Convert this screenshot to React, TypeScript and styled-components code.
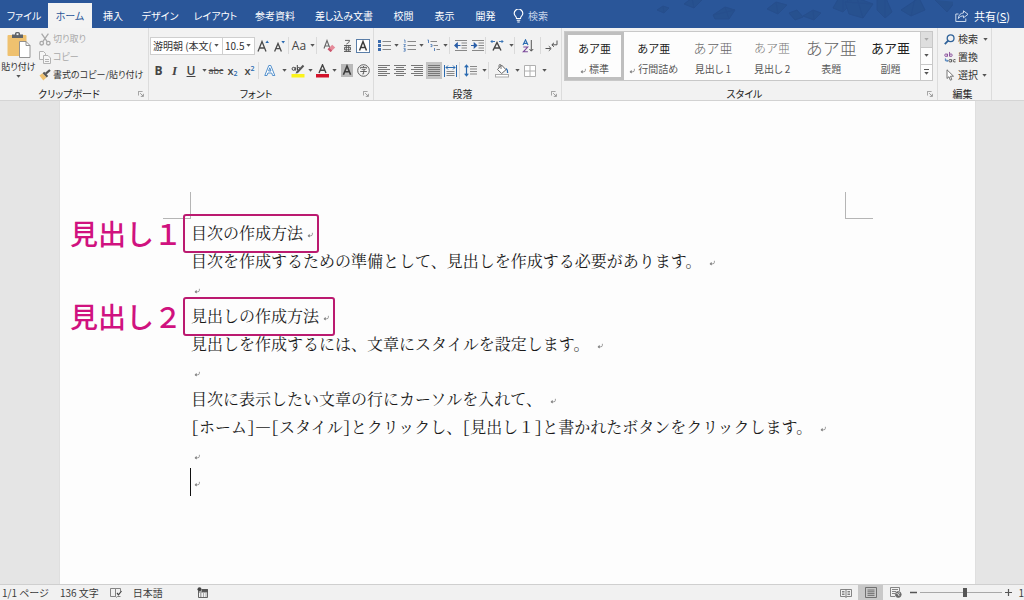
import React from "react";
import styled, { createGlobalStyle, css } from "styled-components";

const UI = `"Noto Sans CJK JP", "Noto Sans", sans-serif`;

const Global = createGlobalStyle`
  * { box-sizing: border-box; }
  html, body { margin: 0; padding: 0; }
  body { font-family: ${UI}; font-size: 10px; color: #333; }
  button, select, input { font: inherit; color: inherit; margin: 0; padding: 0; border: 0; background: none; }
  svg { display: block; flex: none; }
`;

const Shell = styled.div`
  display: flex;
  flex-direction: column;
  min-height: 100vh;
  overflow: hidden;
  background: #e5e5e5;
`;

/* ---------- title bar ---------- */

const TitleBar = styled.header`
  display: flex;
  height: 28px;
  background: #2a5699;
  color: #fff;
  white-space: nowrap;
`;

const Tabs = styled.nav`
  display: flex;
  align-items: flex-end;
  font-feature-settings: "palt";
`;

const Tab = styled.button<{ $w: number; $active?: boolean }>`
  width: ${(p) => p.$w}px;
  height: 25px;
  line-height: 25px;
  text-align: center;
  ${(p) =>
    p.$active &&
    css`
      background: #f3f3f3;
      color: #2a5699;
    `}
`;

const TellMe = styled.button`
  display: flex;
  align-items: center;
  gap: 4px;
  height: 25px;
  margin-left: 7px;
  color: #c5d3ea;
`;

const Backdrop = styled.div`
  flex: 1;
  display: flex;
  justify-content: flex-end;
  overflow: hidden;
`;

const Share = styled.button`
  display: flex;
  align-items: center;
  gap: 5px;
  padding: 4px 14px 0 2px;
  font-size: 11px;
`;

/* ---------- ribbon ---------- */

const Ribbon = styled.div`
  display: flex;
  height: 73px;
  background: #f2f2f2;
  border-bottom: 1px solid #d5d5d5;
  white-space: nowrap;
`;

const Group = styled.section<{ $w?: number }>`
  display: flex;
  flex-direction: column;
  min-width: 0;
  ${(p) => (p.$w ? `flex: 0 0 ${p.$w}px;` : "flex: 1;")}
  border-right: 1px solid #dcdcdc;
`;

const Rest = styled.div`
  flex: 0 0 32px;
`;

const GroupBody = styled.div<{ $column?: boolean; $pad?: string }>`
  flex: 1;
  display: flex;
  flex-direction: ${(p) => (p.$column ? "column" : "row")};
  padding: ${(p) => p.$pad ?? "0"};
`;

const GroupFoot = styled.div`
  display: flex;
  align-items: center;
  height: 13px;
  line-height: 13px;
  padding-right: 4px;
  font-feature-settings: "palt";
  color: #222;
`;

const GroupName = styled.span`
  flex: 1;
  text-align: center;
`;

const Bare = styled.button`
  display: flex;
  align-items: center;
`;

const PasteButton = styled.button`
  display: flex;
  flex-direction: column;
  align-items: center;
  width: 37px;
  padding-top: 4px;
  font-size: 9px;
  line-height: 17px;
  font-feature-settings: "palt";
`;

const Commands = styled.div<{ $small?: boolean }>`
  display: flex;
  flex-direction: column;
  padding: 2px 0 0 2px;
  font-size: ${(p) => (p.$small ? 9 : 10)}px;
`;

const Command = styled.button<{ $disabled?: boolean }>`
  display: flex;
  align-items: center;
  gap: 2px;
  height: 18px;
  line-height: 18px;
  font-feature-settings: "palt";
  color: ${(p) => (p.$disabled ? "#a9a9a9" : "#333")};
`;

const ToolRow = styled.div`
  display: flex;
  align-items: center;
  height: 25px;
`;

const Tool = styled.button<{ $w: number; $on?: boolean }>`
  display: flex;
  align-items: center;
  justify-content: center;
  flex: none;
  width: ${(p) => p.$w}px;
  height: 17px;
  font-family: "Open Sans", ${UI};
  font-size: 12px;
  line-height: 16px;
  color: #444;
  background: ${(p) => (p.$on ? "#c3c3c3" : "transparent")};
`;

const Bold = styled.b`
  font-weight: 700;
`;

const Slanted = styled.i`
  font-family: "Liberation Serif", serif;
  font-size: 13px;
  font-weight: 700;
`;

const Underlined = styled.u`
  font-weight: 600;
`;

const Struck = styled.s`
  font-size: 9px;
`;

const Script = styled.span<{ $up?: boolean }>`
  display: inline-flex;
  align-items: ${(p) => (p.$up ? "flex-start" : "flex-end")};
  font-size: 11px;
  line-height: 12px;
  font-weight: 600;
  small {
    font-size: 7px;
    line-height: 7px;
    color: #2a6ab0;
  }
`;

const Rule = styled.span`
  flex: none;
  width: 1px;
  height: 17px;
  background: #dadada;
`;

const Field = styled.label<{ $w: number }>`
  display: flex;
  align-items: center;
  width: ${(p) => p.$w}px;
  height: 18px;
  padding: 0 3px 0 2px;
  background: #fff;
  border: 1px solid #cfcfcf;
  & + & {
    border-left: 0;
  }
`;

const Select = styled.select`
  flex: 1;
  min-width: 0;
  appearance: none;
  overflow: hidden;
  outline: none;
  line-height: 16px;
`;

const Gallery = styled.div`
  display: flex;
  flex: 1;
  height: 50px;
  background: #fdfdfd;
  border: 1px solid #c8c8c8;
`;

const StyleCard = styled.button<{ $on?: boolean }>`
  flex: 1;
  display: flex;
  flex-direction: column;
  align-items: center;
  justify-content: space-between;
  border: 3px solid ${(p) => (p.$on ? "#bfbfbf" : "transparent")};
  font-feature-settings: "palt";
`;

const Sample = styled.span<{ $size: number; $tone: string; $light?: boolean }>`
  height: 26px;
  line-height: 26px;
  font-size: ${(p) => p.$size}px;
  font-weight: ${(p) => (p.$light ? 300 : 400)};
  color: ${(p) => p.$tone};
  font-feature-settings: normal;
`;

const CardName = styled.span`
  display: flex;
  align-items: center;
  gap: 3px;
  line-height: 16px;
  color: #555;
`;

const Scroller = styled.div`
  display: flex;
  flex-direction: column;
  width: 12px;
  border-left: 1px solid #c8c8c8;
`;

const ScrollButton = styled.button<{ $off?: boolean }>`
  flex: 1;
  display: flex;
  align-items: center;
  justify-content: center;
  background: ${(p) => (p.$off ? "#dedede" : "#fdfdfd")};
  & + & {
    border-top: 1px solid #c8c8c8;
  }
`;

/* ---------- document ---------- */

const Desk = styled.main`
  flex: 1;
  display: flex;
  padding: 0 49px 0 60px;
`;

const Sheet = styled.article`
  flex: 1;
  padding-top: 91px;
  background: #fdfdfd;
  box-shadow: 0 0 1px #c4c4c4;
`;

const Margins = styled.div`
  display: flex;
  justify-content: space-between;
  padding: 0 102px 0 103px;
`;

const Corner = styled.span<{ $side: "left" | "right" }>`
  width: 28px;
  height: 27px;
  border-bottom: 1px solid #b5b5b5;
  border-${(p) => (p.$side === "left" ? "right" : "left")}: 1px solid #b5b5b5;
`;

const Body = styled.div`
  padding: 0 110px 0 130px;
  color: #1a1a1a;
  font-size: 16px;
  font-family: "Noto Serif CJK JP", ${UI};
  font-weight: 400;
`;

const Line = styled.p<{ $caret?: boolean }>`
  display: flex;
  align-items: center;
  margin: 0;
  height: 28px;
  line-height: 28px;
  gap: 8px;
  white-space: nowrap;
  border-left: 1px solid ${(p) => (p.$caret ? "#111" : "transparent")};
`;

const Blank = styled(Line)`
  padding-left: 3px;
  height: ${(p) => (p.$caret ? 28 : 27)}px;
`;

const Half = styled.span`
  font-feature-settings: "hwid";
`;

const Heading = styled.h2`
  position: relative;
  display: flex;
  align-items: center;
  gap: 4px;
  width: max-content;
  height: 28px;
  margin: 0 0 0 1px;
  font-size: 16px;
  font-weight: 400;
  line-height: 28px;
  white-space: nowrap;
  &::after {
    content: "";
    position: absolute;
    inset: -5px -6px -6px -8px;
    border: 2px solid #bb1a70;
    border-radius: 3px;
  }
`;

const Note = styled.span`
  position: absolute;
  right: 100%;
  top: 0;
  margin-right: 9px;
  font-family: ${UI};
  font-size: 28px;
  font-weight: 500;
  color: #d0127f;
`;

/* ---------- status bar ---------- */

const StatusBar = styled.footer`
  display: flex;
  align-items: center;
  height: 16px;
  line-height: 16px;
  padding: 0 0 0 2px;
  background: #f1f1f1;
  border-top: 1px solid #cfcfcf;
  white-space: nowrap;
  color: #3c3c3c;
`;

const StatusItems = styled.div`
  flex: 1;
  display: flex;
  align-items: center;
  gap: 11px;
  font-feature-settings: "palt";
`;

const Macro = styled(Bare)`
  margin-left: 23px;
`;

const ViewButton = styled.button<{ $on?: boolean }>`
  display: flex;
  align-items: center;
  justify-content: center;
  width: 25px;
  height: 15px;
  background: ${(p) => (p.$on ? "#c8c8c8" : "transparent")};
`;

const Zoom = styled.div`
  display: flex;
  align-items: center;
  gap: 3px;
  padding-left: 2px;
`;

const Slider = styled.input`
  appearance: none;
  width: 82px;
  height: 9px;
  background: linear-gradient(#a8a8a8, #a8a8a8) center / 100% 1px no-repeat;
  &::-webkit-slider-thumb {
    appearance: none;
    width: 4px;
    height: 9px;
    background: #555;
  }
`;

const Percent = styled.span`
  padding-left: 3px;
`;

/* ---------- drawings ---------- */

const Caret = ({ color = "#555" }: { color?: string }) => (
  <svg width="5" height="3" viewBox="0 0 5 3">
    <path d="M0.3 0h4.4L2.5 2.7z" fill={color} />
  </svg>
);

const Drop = ({ w, label }: { w: number; label: string }) => (
  <Tool $w={w} aria-label={label}>
    <Caret />
  </Tool>
);

const Return = ({ color = "#888" }: { color?: string }) => (
  <svg width="6" height="12" viewBox="0 0 6 12" fill="none" stroke={color} strokeWidth="0.8">
    <path d="M5.4 5.800v1.400q0 1.600-1.600 1.600H1" />
    <path d="M2.400 7.600L0.900 8.800l1.500 1.200z" fill={color} />
  </svg>
);

const Launcher = () => (
  <Bare aria-label="詳細">
    <svg width="6" height="6" viewBox="0 0 6 6" fill="none" stroke="#888" strokeWidth="0.8">
      <path d="M0.4 4.5V0.4h4.2" />
      <path d="M2.2 2.2l3 3M5.4 2.8v2.6H2.8" />
    </svg>
  </Bare>
);

const Foot = ({ children, plain }: { children: React.ReactNode; plain?: boolean }) => (
  <GroupFoot>
    <GroupName>{children}</GroupName>
    {!plain && <Launcher />}
  </GroupFoot>
);

const Bars = ({ rows, w = 13 }: { rows: [number, number][]; w?: number }) => (
  <svg width={w} height="13" viewBox={`0 0 ${w} 13`} stroke="#777" strokeWidth="1">
    {rows.map(([a, b], i) => (
      <path key={i} d={`M${a} ${i * 2 + 1.5}H${b}`} />
    ))}
  </svg>
);

const PasteIcon = () => (
  <svg width="24" height="26" viewBox="0 0 24 26">
    <rect x="0.5" y="3" width="19" height="21" rx="1" fill="#efc16f" />
    <path d="M5 2.5h3V1.6A1.6 1.6 0 0 1 9.6 0h1.8A1.6 1.6 0 0 1 13 1.6v.9h3V6H5z" fill="#5f6368" />
    <rect x="9.5" y="1.3" width="2" height="1.8" fill="#f2f2f2" />
    <path d="M12.5 9.5h6.5l4 4v12H12.5z" fill="#fff" stroke="#888" strokeWidth="0.9" />
    <path d="M19 9.5v4h4" fill="none" stroke="#888" strokeWidth="0.9" />
  </svg>
);

const ScissorsIcon = () => (
  <svg width="12" height="13" viewBox="0 0 12 13" fill="none" stroke="#a9a9a9" strokeWidth="1.3">
    <path d="M2.6 0.6l5.6 8M9.4 0.6l-5.6 8" />
    <circle cx="2.7" cy="10.2" r="1.8" />
    <circle cx="9.3" cy="10.2" r="1.8" />
  </svg>
);

const CopyIcon = () => (
  <svg width="12" height="13" viewBox="0 0 12 13" fill="#f6f6f6" stroke="#b3b3b3">
    <path d="M0.5 0.5h4l2 2v6h-6z" />
    <path d="M4.5 4.5h4.5l2.5 2.5v5.5h-7z" />
    <path d="M6 8.5h4M6 10.5h4" />
  </svg>
);

const BrushIcon = () => (
  <svg width="12" height="12" viewBox="0 0 12 12">
    <path d="M0.5 6.5l3-2.2 4 4.2-3.2 3z" fill="#efc16f" />
    <path d="M3.6 4.2l1.6-1.4 4 4.3-1.5 1.4z" fill="#555" />
    <path d="M6.8 4.6L11 1" stroke="#555" strokeWidth="2.2" />
  </svg>
);

const BigA = ({ up }: { up?: boolean }) => (
  <svg width="13" height="14" viewBox="0 0 13 14" fill="none">
    <path d={up ? "M1 12.5L5 2.5l4 10M2.4 9h5.2" : "M1.6 12.5L5 4.5l3.4 8M2.8 9.6h4.4"} stroke="#4a4a4a" strokeWidth="1.3" />
    <path d={up ? "M8.4 4l1.8-2.4L12 4z" : "M8.4 2L12 2l-1.8 2.4z"} fill="#2a6ab0" />
  </svg>
);

const EraserIcon = () => (
  <svg width="13" height="14" viewBox="0 0 13 14" fill="none">
    <path d="M1 9.5L4 1.5l3 8M2 7h4" stroke="#666" strokeWidth="1.1" />
    <path d="M4.6 10.2l4.6-4.4 3 2.6-4.6 4.6z" fill="#e58a99" />
    <path d="M4.6 10.2l1.5-1.4 3 2.8-1.5 1.4z" fill="#c9566d" />
  </svg>
);

const RubyIcon = () => (
  <svg width="9" height="14" viewBox="0 0 9 14" fill="none" stroke="#555" strokeWidth="0.9">
    <path d="M2 1.4h4.6Q6.400 4 3.400 5" />
    <path d="M1 6.500h7M1 12.500h7M3.300 6.500v6M5.700 6.500v6M1.500 8.300h6v2.500h-6z" />
  </svg>
);

const BoxedA = () => (
  <svg width="14" height="14" viewBox="0 0 14 14" fill="none">
    <rect x="0.5" y="0.5" width="13" height="13" fill="#fff" stroke="#5a7ea8" />
    <path d="M3.500 11.500L7 2.500l3.500 9M4.800 8.500h4.400" stroke="#3d3d3d" strokeWidth="1.5" />
  </svg>
);

const OutlineA = () => (
  <svg width="12" height="13" viewBox="0 0 12 13" fill="#fff" stroke="#3f84c7" strokeWidth="0.9">
    <path d="M0.800 11.500L4.800 1.500h2l4 10H8.600L7.700 9H3.900L3 11.500zM4.600 7h2.400L5.800 3.800z" />
  </svg>
);

const MarkerIcon = () => (
  <svg width="14" height="14" viewBox="0 0 14 14" fill="none">
    <circle cx="2.600" cy="4.800" r="1.500" stroke="#444" />
    <path d="M4.300 3.200v3.400M6.300 1v5.500" stroke="#444" />
    <circle cx="7.700" cy="4.900" r="1.400" stroke="#444" />
    <path d="M6 8.500l6.500-7" stroke="#555" strokeWidth="2" />
    <path d="M4.500 9.500l1-2 1.500 1.400z" fill="#555" />
    <rect x="0.500" y="10" width="13" height="3.500" fill="#fbf31b" />
  </svg>
);

const ColorA = () => (
  <svg width="13" height="14" viewBox="0 0 13 14" fill="none">
    <path d="M3 9L6.500 0.800 10 9M4.300 6.300h4.400" stroke="#444" strokeWidth="1.400" />
    <rect y="10" width="13" height="3.500" fill="#d3122a" />
  </svg>
);

const ShadedA = () => (
  <svg width="12" height="13" viewBox="0 0 12 13" fill="none">
    <rect width="12" height="13" fill="#b9b9b9" />
    <path d="M2.400 10.800L6 2l3.600 8.800M3.800 7.800h4.400" stroke="#3d3d3d" strokeWidth="1.600" />
  </svg>
);

const CircledIcon = () => (
  <svg width="13" height="13" viewBox="0 0 13 13" fill="none" stroke="#555" strokeWidth="0.900">
    <circle cx="6.500" cy="6.500" r="5.800" />
    <path d="M6.500 2v1.300M3.500 4.600V3.400h6v1.200M4.600 5.300h3.800L6.600 6.600v3.300H5.300M3.200 7.500h6.600" />
  </svg>
);

const ListIcon = ({ kind }: { kind: "dot" | "num" | "tree" }) => (
  <svg width="13" height="13" viewBox="0 0 13 13" fill="none">
    {kind === "dot" && (
      <>
        <path d="M4.500 2.500H13M4.500 6.500H13M4.500 10.500H13" stroke="#888" />
        <path d="M0 1h3v3h-3zM0 5h3v3h-3zM0 9h3v3h-3z" fill="#3c6cae" />
      </>
    )}
    {kind === "num" && (
      <>
        <path d="M4.500 2.500H13M4.500 6.500H13M4.500 10.500H13" stroke="#888" />
        <path d="M1 1h1v3M0.500 5.500h2l-1.500 2h1.500M0.500 9.300h1.700v2.900H0.500M1 10.700h1" stroke="#4a78b5" strokeWidth="0.800" />
      </>
    )}
    {kind === "tree" && (
      <>
        <path d="M3.500 2.500H10M6.500 6.500H11M9.500 10.500H13" stroke="#888" />
        <path d="M0.500 1h1v3M3.500 5.600h1.500v2H3.600M7.500 9v3" stroke="#4a78b5" strokeWidth="0.900" />
      </>
    )}
  </svg>
);

const IndentIcon = ({ right }: { right?: boolean }) => (
  <svg width="13" height="13" viewBox="0 0 13 13" fill="none">
    <path d="M1 1.500H13M7.500 4H13M7.500 6.500H13M7.500 9H13M1 11.500H13" stroke="#888" />
    <path d={right ? "M0 6.500h4M3.300 4.300l2.400 2.200-2.400 2.200z" : "M2.500 6.500h4M3.200 4.300l-2.400 2.200 2.400 2.200z"} stroke="#2a5ea8" strokeWidth="1.200" fill="#2a5ea8" />
  </svg>
);

const ScaleAIcon = () => (
  <svg width="14" height="13" viewBox="0 0 14 13" fill="none">
    <path d="M3 11.500L7 3.500l4 8M4.500 9h5" stroke="#444" strokeWidth="1.400" />
    <path d="M1 2.500h4M9 2.500h4M2.500 1L1 2.500 2.500 4M11.500 1L13 2.500 11.500 4" stroke="#2a6ab0" strokeWidth="0.900" />
  </svg>
);

const SortIcon = () => (
  <svg width="12" height="14" viewBox="0 0 12 14" fill="none">
    <path d="M1 6L3.500 0.800 6 6M2 4.400h3" stroke="#2a6ab0" strokeWidth="1.100" />
    <path d="M1.300 8h4.400L1.300 12.800h4.600" stroke="#7b4a9a" strokeWidth="1.100" />
    <path d="M9.300 1v11M7.500 10l1.800 2.200L11.200 10" stroke="#555" />
  </svg>
);

const MarksIcon = () => (
  <svg width="13" height="12" viewBox="0 0 13 12" fill="none" stroke="#555" strokeWidth="1">
    <path d="M12 0.500v4.300H7M9 2.800L6.800 4.800 9 6.800" />
    <path d="M0.500 8.500h5M3.800 6.200l2.400 2.300-2.400 2.300" />
  </svg>
);

const DistributeIcon = () => (
  <svg width="13" height="14" viewBox="0 0 13 14" fill="none">
    <path d="M0.500 1v12M12.500 1v12" stroke="#2a6ab0" />
    <path d="M2 3.500h9M4 1.500l-2 2 2 2M9 1.500l2 2-2 2" stroke="#2a6ab0" />
    <path d="M2.500 7.500h8M2.500 9.500h8M2.500 11.500h8" stroke="#888" />
  </svg>
);

const SpacingIcon = () => (
  <svg width="13" height="13" viewBox="0 0 13 13" fill="none">
    <path d="M6 2.500h7M6 5h7M6 7.500h7M6 10h7" stroke="#888" />
    <path d="M2.500 1.500v10M0.700 3.400l1.800-2.200 1.800 2.200M0.700 9.600l1.800 2.200 1.800-2.200" stroke="#2a6ab0" strokeWidth="1.200" />
  </svg>
);

const BucketIcon = () => (
  <svg width="14" height="14" viewBox="0 0 14 14" fill="none">
    <path d="M6.500 1L11 5.700 6.700 9.500 2.500 5.500z" fill="#fff" stroke="#666" />
    <path d="M6 5V1.500Q6 0.500 5 0.500T4 1.500v2" stroke="#666" strokeWidth="0.900" />
    <path d="M11 4.500q2 1.500 1.600 4.500" stroke="#2a6ab0" strokeWidth="1.300" />
    <rect x="0.500" y="10.500" width="13" height="2.500" fill="#fff" stroke="#aaa" />
  </svg>
);

const BorderIcon = () => (
  <svg width="12" height="12" viewBox="0 0 12 12" fill="#fff" stroke="#b0b0b0">
    <path d="M0.500 0.500h11v11h-11zM6 0.500v11M0.500 6h11" />
  </svg>
);

const SearchIcon = () => (
  <svg width="12" height="11" viewBox="0 0 12 11" fill="none" stroke="#2f6299">
    <circle cx="6.600" cy="4.200" r="3.400" strokeWidth="1.300" />
    <path d="M4.200 6.700L0.800 10.200" strokeWidth="1.800" />
  </svg>
);

const ReplaceIcon = () => (
  <svg width="12" height="13" viewBox="0 0 13 13" fill="none" strokeWidth="1">
    <g stroke="#8a4f9c">
      <circle cx="2.200" cy="4" r="1.400" />
      <path d="M3.800 2.400v3.200M6 0.500v5" />
      <circle cx="7.500" cy="4" r="1.400" />
    </g>
    <g stroke="#555">
      <circle cx="6.700" cy="10" r="1.400" />
      <path d="M8.300 8.400v3.200M12.500 8.900q-2.400-1-2.400 1.100t2.400 1.200" />
    </g>
    <path d="M1.500 7.500v2.500h2.500M3 8.700l1.200 1.300L3 11.300" stroke="#2a6ab0" strokeWidth="0.900" />
  </svg>
);

const PointerIcon = () => (
  <svg width="12" height="12" viewBox="-2 0 12 12" fill="#fff" stroke="#666" strokeWidth="0.900">
    <path d="M1 0.800v8.700l2-1.800 1.300 3.500 1.500-.6L4.500 7.200h3z" />
  </svg>
);

const BulbIcon = () => (
  <svg width="11" height="14" viewBox="0 0 11 14" fill="none" stroke="#fff" strokeWidth="1.100">
    <path d="M3.500 9.500Q3.500 8 2.300 6.800A4.100 4.100 0 1 1 8.700 6.800Q7.500 8 7.500 9.500z" />
    <path d="M3.700 11.300h3.600M4.300 13h2.400" />
  </svg>
);

const ShareIcon = () => (
  <svg width="14" height="12" viewBox="0 0 14 12" fill="none" stroke="#dce6f5" strokeWidth="0.900">
    <path d="M3.500 4H0.800v7.500h10V8.500" />
    <path d="M8.500 0.800L13 4.300 8.500 7.800v-2Q5.200 5.600 3.300 8.500 3.800 3.400 8.500 2.900z" />
  </svg>
);

const Crystals = () => (
  <svg width="304" height="28" viewBox="0 0 304 28" fill="#27518f" stroke="#264e8d" strokeWidth="1">
    <path d="M8 10l6-4 6 2-5 5zM14 6l1 7" />
    <path d="M35 4l8-6 10 2-8 8zM43-2l2 10" />
    <path d="M64 15l12-8 10 3-6 9-14 0zM76 7l4 12M64 15l22-5" />
    <path d="M118 9l9-7 11 3-9 9zM127 2l2 12" />
    <path d="M140 13l8-3 6 7-8 3z" />
    <path d="M154 16l10-6 8 3-7 7zM164 10l1 10" />
    <path d="M184 8l8-14 10 10-8 8zM194 12l0-20" />
    <path d="M196 2l12-4 16 6-10 14-14-4zM208-2l6 20M196 2l28 2" />
    <path d="M228 0l8-4 7 16-7 6-8-8zM236-4v22" />
    <path d="M252 10l10 6 14-6-6-12zM262 16l4-18" />
    <path d="M286 0l12 12 8-10" />
  </svg>
);

const ProofIcon = () => (
  <svg width="12" height="11" viewBox="0 0 12 11" fill="none" stroke="#777" strokeWidth="0.900">
    <path d="M5.500 1.500H0.500v8h5l1 .8 1-.8h3M5.500 1.500v8M5.500 1.500h5v3" />
    <path d="M7 6l1.500 1.800L11.500 4" stroke="#444" strokeWidth="1.200" />
  </svg>
);

const MacroIcon = () => (
  <svg width="11" height="11" viewBox="0 0 11 11" fill="none" stroke="#555" strokeWidth="0.900">
    <path d="M1.500 4v6.500h9V2.500H5M1.500 5h9M3 7h1.500M6 7h1M8.500 7h1M3 9h1.500M6 9h1M8.500 9h1" />
    <path d="M5 2.500h5.500v2H5z" fill="#555" />
    <circle cx="2.500" cy="2.300" r="2" fill="#444" stroke="none" />
  </svg>
);

const ReadIcon = () => (
  <svg width="12" height="10" viewBox="0 0 12 10" fill="none" stroke="#777" strokeWidth="0.900">
    <path d="M6 1.500H0.500v7H5l1 .8 1-.8h4.500v-7H6v8M2 3.500h2.500M2 5h2.500M2 6.500h2.500M7.500 3.500H10M7.500 5H10M7.500 6.500H10" />
  </svg>
);

const PrintIcon = () => (
  <svg width="12" height="11" viewBox="0 0 12 11" fill="none" stroke="#666" strokeWidth="0.900">
    <path d="M0.500 0.500h11v10h-11zM2.500 3h7M2.500 4.800h7M2.500 6.600h7M2.500 8.400h7" />
  </svg>
);

const WebIcon = () => (
  <svg width="12" height="11" viewBox="0 0 12 11" fill="none" stroke="#777" strokeWidth="0.900">
    <path d="M5 9.500H0.500v-9h9V4M2 2.500h6M2 4.500h4M2 6.500h3" />
    <circle cx="8.300" cy="7.500" r="2.900" fill="#666" />
    <path d="M6.500 6.500l2 .5.500 2M8.500 5.500l1.500 1" stroke="#eee" />
  </svg>
);

/* ---------- data ---------- */

const tabs: [string, number][] = [
  ["ファイル", 48],
  ["ホーム", 44],
  ["挿入", 42],
  ["デザイン", 52],
  ["レイアウト", 59],
  ["参考資料", 60],
  ["差し込み文書", 78],
  ["校閲", 41],
  ["表示", 41],
  ["開発", 41],
];

const styleCards = [
  { name: "標準", size: 11, tone: "#222", mark: true, on: true },
  { name: "行間詰め", size: 11, tone: "#222", mark: true },
  { name: "見出し 1", size: 13, tone: "#666", light: true },
  { name: "見出し 2", size: 12, tone: "#777", light: true },
  { name: "表題", size: 17, tone: "#666", light: true },
  { name: "副題", size: 13, tone: "#222" },
];

const FULL: [number, number] = [0, 12];
const SHORT_L: [number, number] = [0, 9];
const SHORT_C: [number, number] = [2, 10];
const SHORT_R: [number, number] = [3, 12];

export default function App() {
  return (
    <Shell>
      <Global />
      <TitleBar>
        <Tabs>
          {tabs.map(([name, w]) => (
            <Tab key={name} $w={w} $active={name === "ホーム"}>
              {name}
            </Tab>
          ))}
          <TellMe>
            <BulbIcon />
            検索
          </TellMe>
        </Tabs>
        <Backdrop>
          <Crystals />
        </Backdrop>
        <Share>
          <ShareIcon />
          <span>
            共有(<u>S</u>)
          </span>
        </Share>
      </TitleBar>

      <Ribbon>
        <Group $w={149}>
          <GroupBody>
            <PasteButton>
              <PasteIcon />
              貼り付け
              <Caret />
            </PasteButton>
            <Commands $small>
              <Command $disabled>
                <ScissorsIcon />
                切り取り
              </Command>
              <Command $disabled>
                <CopyIcon />
                コピー
              </Command>
              <Command>
                <BrushIcon />
                書式のコピー/貼り付け
              </Command>
            </Commands>
          </GroupBody>
          <Foot>クリップボード</Foot>
        </Group>

        <Group $w={225}>
          <GroupBody $column $pad="5px 0 0 1px">
            <ToolRow>
              <Field $w={73}>
                <Select aria-label="フォント" defaultValue="yu">
                  <option value="yu">游明朝 (本文(</option>
                </Select>
                <Caret />
              </Field>
              <Field $w={32}>
                <Select aria-label="サイズ" defaultValue="10.5">
                  <option value="10.5">10.5</option>
                </Select>
                <Caret />
              </Field>
              <Tool $w={16} aria-label="拡大"><BigA up /></Tool>
              <Tool $w={17} aria-label="縮小"><BigA /></Tool>
              <Rule />
              <Tool $w={20}>Aa</Tool>
              <Drop w={7} label="文字種の変換" />
              <Rule />
              <Tool $w={25} aria-label="書式のクリア"><EraserIcon /></Tool>
              <Tool $w={11} aria-label="ルビ"><RubyIcon /></Tool>
              <Tool $w={20} aria-label="囲み線"><BoxedA /></Tool>
            </ToolRow>
            <ToolRow>
              <Tool $w={17}><Bold>B</Bold></Tool>
              <Tool $w={15}><Slanted>I</Slanted></Tool>
              <Tool $w={18}><Underlined>U</Underlined></Tool>
              <Drop w={8} label="下線の種類" />
              <Tool $w={16}><Struck>abc</Struck></Tool>
              <Tool $w={17}><Script>x<small>2</small></Script></Tool>
              <Tool $w={17}><Script $up>x<small>2</small></Script></Tool>
              <Rule />
              <Tool $w={22} aria-label="文字の効果"><OutlineA /></Tool>
              <Drop w={7} label="文字の効果の種類" />
              <Tool $w={19} aria-label="蛍光ペン"><MarkerIcon /></Tool>
              <Drop w={6} label="蛍光ペンの色" />
              <Tool $w={18} aria-label="フォントの色"><ColorA /></Tool>
              <Drop w={7} label="フォントの色の種類" />
              <Tool $w={17} aria-label="文字の網かけ"><ShadedA /></Tool>
              <Tool $w={17} aria-label="囲い文字"><CircledIcon /></Tool>
            </ToolRow>
          </GroupBody>
          <Foot>フォント</Foot>
        </Group>

        <Group $w={188}>
          <GroupBody $column $pad="5px 0 0 2px">
            <ToolRow>
              <Tool $w={16} aria-label="箇条書き"><ListIcon kind="dot" /></Tool>
              <Drop w={9} label="行頭文字" />
              <Tool $w={16} aria-label="段落番号"><ListIcon kind="num" /></Tool>
              <Drop w={8} label="番号の種類" />
              <Tool $w={17} aria-label="アウトライン"><ListIcon kind="tree" /></Tool>
              <Drop w={7} label="リストの種類" />
              <Rule />
              <Tool $w={20} aria-label="インデントを減らす"><IndentIcon /></Tool>
              <Tool $w={15} aria-label="インデントを増やす"><IndentIcon right /></Tool>
              <Rule />
              <Tool $w={22} aria-label="拡張書式"><ScaleAIcon /></Tool>
              <Drop w={6} label="拡張書式の種類" />
              <Rule />
              <Tool $w={25} aria-label="並べ替え"><SortIcon /></Tool>
              <Rule />
              <Tool $w={20} aria-label="編集記号"><MarksIcon /></Tool>
            </ToolRow>
            <ToolRow>
              <Tool $w={16} aria-label="左揃え"><Bars rows={[FULL, SHORT_L, FULL, SHORT_L, FULL, SHORT_L]} /></Tool>
              <Tool $w={17} aria-label="中央揃え"><Bars rows={[FULL, SHORT_C, FULL, SHORT_C, FULL, SHORT_C]} /></Tool>
              <Tool $w={17} aria-label="右揃え"><Bars rows={[FULL, SHORT_R, FULL, SHORT_R, FULL, SHORT_R]} /></Tool>
              <Tool $w={16} $on aria-label="両端揃え"><Bars rows={[FULL, FULL, FULL, FULL, FULL, FULL]} /></Tool>
              <Tool $w={17} aria-label="均等割り付け"><DistributeIcon /></Tool>
              <Rule />
              <Tool $w={20} aria-label="行間"><SpacingIcon /></Tool>
              <Drop w={8} label="行間の種類" />
              <Rule />
              <Tool $w={25} aria-label="塗りつぶし"><BucketIcon /></Tool>
              <Drop w={6} label="塗りつぶしの色" />
              <Tool $w={19} aria-label="罫線"><BorderIcon /></Tool>
              <Drop w={10} label="罫線の種類" />
            </ToolRow>
          </GroupBody>
          <Foot>段落</Foot>
        </Group>

        <Group>
          <GroupBody $pad="3px 4px 0 2px">
            <Gallery>
              {styleCards.map((c) => (
                <StyleCard key={c.name} $on={c.on}>
                  <Sample $size={c.size} $tone={c.tone} $light={c.light}>
                    あア亜
                  </Sample>
                  <CardName>
                    {c.mark && <Return />}
                    {c.name}
                  </CardName>
                </StyleCard>
              ))}
              <Scroller>
                <ScrollButton $off aria-label="上へ"><Caret color="#aaa" /></ScrollButton>
                <ScrollButton aria-label="下へ"><Caret /></ScrollButton>
                <ScrollButton aria-label="その他">
                  <svg width="5" height="6" viewBox="0 0 5 6">
                    <path d="M0 0h5v1H0zM0.300 3h4.400L2.500 5.700z" fill="#555" />
                  </svg>
                </ScrollButton>
              </Scroller>
            </Gallery>
          </GroupBody>
          <Foot>スタイル</Foot>
        </Group>

        <Group $w={54}>
          <GroupBody $pad="0 0 0 4px">
            <Commands>
              <Command><SearchIcon />検索<Drop w={10} label="検索の種類" /></Command>
              <Command><ReplaceIcon />置換</Command>
              <Command><PointerIcon />選択<Drop w={8} label="選択の種類" /></Command>
            </Commands>
          </GroupBody>
          <Foot plain>編集</Foot>
        </Group>
        <Rest />
      </Ribbon>

      <Desk>
        <Sheet>
          <Margins>
            <Corner $side="left" />
            <Corner $side="right" />
          </Margins>
          <Body>
            <Heading>
              <Note>見出し１</Note>
              目次の作成方法
              <Return />
            </Heading>
            <Line>目次を作成するための準備として、見出しを作成する必要があります。<Return /></Line>
            <Blank><Return /></Blank>
            <Heading>
              <Note>見出し２</Note>
              見出しの作成方法
              <Return />
            </Heading>
            <Line>見出しを作成するには、文章にスタイルを設定します。<Return /></Line>
            <Blank><Return /></Blank>
            <Line>目次に表示したい文章の行にカーソルを入れて、<Return /></Line>
            <Line>
              <span>
                <Half>[</Half>ホーム<Half>]</Half>―<Half>[</Half>スタイル<Half>]</Half>とクリックし、
                <Half>[</Half>見出し１<Half>]</Half>と書かれたボタンをクリックします。
              </span>
              <Return />
            </Line>
            <Blank><Return /></Blank>
            <Blank $caret><Return /></Blank>
          </Body>
        </Sheet>
      </Desk>

      <StatusBar>
        <StatusItems>
          <span>1/1 ページ</span>
          <span>136 文字</span>
          <Bare aria-label="文章校正"><ProofIcon /></Bare>
          <span>日本語</span>
          <Macro aria-label="マクロの記録"><MacroIcon /></Macro>
        </StatusItems>
        <ViewButton aria-label="閲覧モード"><ReadIcon /></ViewButton>
        <ViewButton $on aria-label="印刷レイアウト"><PrintIcon /></ViewButton>
        <ViewButton aria-label="Web レイアウト"><WebIcon /></ViewButton>
        <Zoom>
          <Bare aria-label="縮小">
            <svg width="7" height="7" viewBox="0 0 7 7"><path d="M0 3.500h7" stroke="#555" strokeWidth="1.500" /></svg>
          </Bare>
          <Slider type="range" aria-label="ズーム" min={0} max={100} defaultValue={55} />
          <Bare aria-label="拡大">
            <svg width="7" height="7" viewBox="0 0 7 7"><path d="M0 3.500h7M3.500 0v7" stroke="#555" strokeWidth="1.200" /></svg>
          </Bare>
          <Percent>1</Percent>
        </Zoom>
      </StatusBar>
    </Shell>
  );
}
